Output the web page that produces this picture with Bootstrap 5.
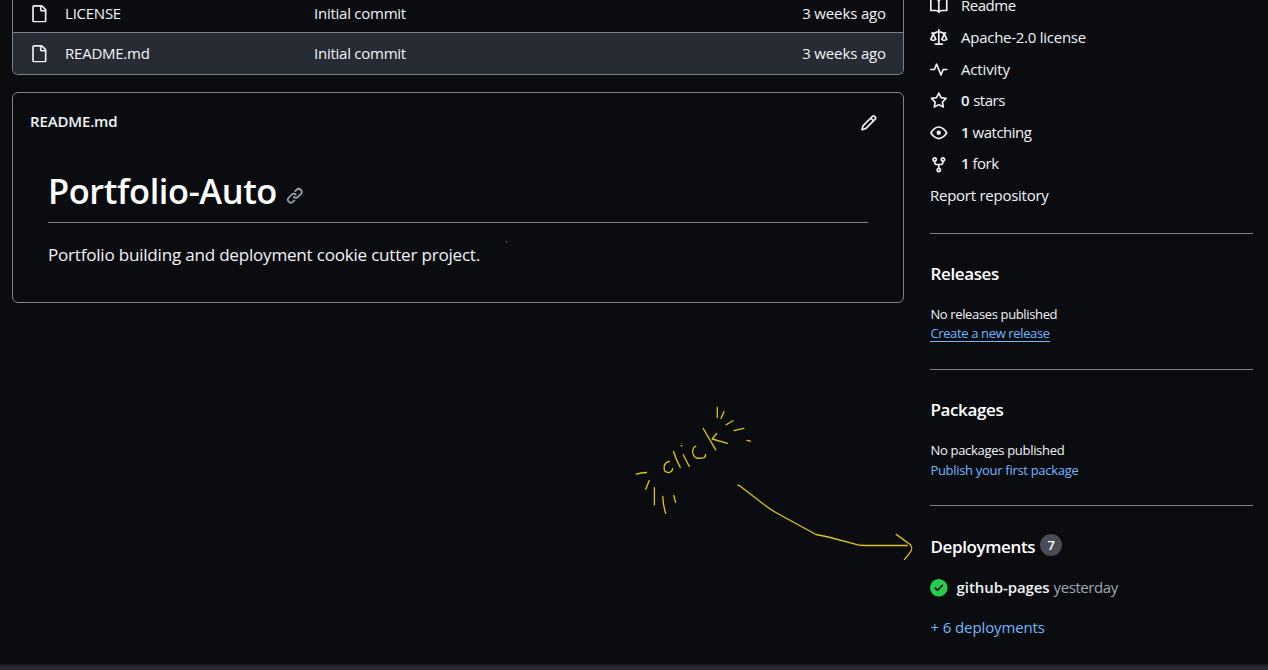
<!DOCTYPE html>
<html lang="en" data-bs-theme="dark">
<head>
<meta charset="utf-8">
<meta name="viewport" content="width=device-width, initial-scale=1">
<title>Portfolio-Auto</title>
<link href="https://cdn.jsdelivr.net/npm/bootstrap@5.3.0/dist/css/bootstrap.min.css" rel="stylesheet">
<style>
:root { --line: #7a828e; --fg: #f0f3f6; --accent: #71b7ff; }
body { background: #0a0c10; color: var(--fg); font: 400 15px/20px "Open Sans", "Noto Sans", sans-serif; letter-spacing: -.26px; height: 670px; overflow: hidden; }
a { color: inherit; text-decoration: none; }
.octo { width: 17.6px; height: 17.6px; fill: currentColor; flex: none; display: block; }
.page { height: 664px; padding: 0 15px 0 12px; gap: 26px; }
.main-col { width: 892px; flex: none; }
.side-col { width: 323px; flex: none; }
.file-box { border: 1px solid var(--line); border-top: 0; border-radius: 0 0 6px 6px; height: 75px; overflow: hidden; margin-bottom: 17px; }
.file-row { padding: 0 17px; white-space: nowrap; }
.file-row .octo { margin: 1px 17.5px 0 0; }
.first-row { height: 32px; padding-bottom: 5px; }
.hover-row { height: 42px; border-top: 1px solid var(--line); background: #272b33; }
.file-row a, .file-row span, .readme-head strong { margin-top: -2px; }
.file-name { width: 249px; }
.ago { letter-spacing: -.14px; }
.readme-box { border: 1px solid var(--line); border-radius: 6px; height: 211px; }
.readme-head { height: 58px; padding: 0 25px 0 17px; }
.readme-head strong { font-weight: 600; letter-spacing: -.15px; }
.readme-head .octo { margin-top: 1px; }
.readme-body { padding: 17px 35px 0; }
.readme-body h1 { font-size: 34.4px; font-weight: 600; line-height: 44px; letter-spacing: -.39px; height: 55px; padding-top: 1px; margin: 0 0 19px; border-bottom: 1px solid var(--line); }
.readme-body h1 .octo { color: #9ea7b3; margin: 18px 0 0 9px; }
.readme-body p { font-size: 17.1px; line-height: 26px; letter-spacing: -.232px; margin: 0; }
.about { margin-top: -10.6px; margin-bottom: 22.05px; }
.about li { height: 31.65px; }
.about .octo { margin: 2px 13.4px 0 0; }
.about strong { font-weight: 600; }
.tight { letter-spacing: -.48px; }
.side-block { border-top: 1px solid var(--line); height: 136px; padding-top: 30px; }
.side-block h2 { font-size: 17px; line-height: 20px; font-weight: 600; letter-spacing: -.38px; margin: 0; padding-left: .5px; }
.side-block p { font-size: 13px; line-height: 20px; letter-spacing: -.3px; margin: 0; padding-left: .4px; }
.side-block .releases { letter-spacing: -.36px; }
.side-block h2 + p { margin-top: 20px; }
.accent { color: var(--accent); }
.lined { display: block; width: max-content; line-height: 16px; padding-top: 1px; border-bottom: 1px solid var(--accent); }
.tally { min-width: 22px; height: 22px; border-radius: 11px; background: #484c54; color: #fff; font-size: 13px; line-height: 22px; font-weight: 600; text-align: center; margin: -3px 0 0 5px; letter-spacing: 0; }
.deploys { padding-top: 31px; }
.deploy { margin: 20px 0; }
.deploy .octo { margin: 2px 9px 0 0; }
.deploy strong { font-weight: 600; letter-spacing: -.08px; margin-right: 4px; }
.deploy span { color: #9ea7b3; letter-spacing: -.43px; }
.more { letter-spacing: -.12px; padding-left: .6px; }
.bottom-bar { height: 6px; background: #272a31; border-top: 2px solid #191b20; }
.sketch { position: absolute; left: 0; top: 0; pointer-events: none; fill: none; stroke: #e0c80a; stroke-width: 1.3; stroke-linecap: round; stroke-linejoin: round; }
</style>
</head>
<body>
<svg width="0" height="0" class="position-absolute">
  <symbol id="file" viewBox="0 0 16 16"><path d="M2 1.75C2 .784 2.784 0 3.75 0h6.586c.464 0 .909.184 1.237.513l2.914 2.914c.329.328.513.773.513 1.237v9.586A1.75 1.75 0 0 1 13.25 16h-9.5A1.75 1.75 0 0 1 2 14.25Zm1.75-.25a.25.25 0 0 0-.25.25v12.5c0 .138.112.25.25.25h9.5a.25.25 0 0 0 .25-.25V6h-2.75A1.75 1.75 0 0 1 9 4.25V1.5Zm6.75.062V4.25c0 .138.112.25.25.25h2.688l-.011-.013-2.914-2.914-.013-.011Z"/></symbol>
</svg>

<div class="page d-flex">
  <main class="main-col">
    <div class="file-box">
      <div class="file-row first-row d-flex align-items-center">
        <svg class="octo"><use href="#file"/></svg>
        <a class="file-name" href="#">LICENSE</a><a href="#">Initial commit</a><span class="ago ms-auto">3 weeks ago</span>
      </div>
      <div class="file-row hover-row d-flex align-items-center">
        <svg class="octo"><use href="#file"/></svg>
        <a class="file-name" href="#">README.md</a><a href="#">Initial commit</a><span class="ago ms-auto">3 weeks ago</span>
      </div>
    </div>
    <section class="readme-box">
      <div class="readme-head d-flex align-items-center justify-content-between">
        <strong>README.md</strong>
        <svg class="octo" viewBox="0 0 16 16"><path d="M11.013 1.427a1.75 1.75 0 0 1 2.474 0l1.086 1.086a1.75 1.75 0 0 1 0 2.474l-8.61 8.61c-.21.21-.47.364-.756.445l-3.251.93a.75.75 0 0 1-.927-.928l.929-3.25c.081-.286.235-.547.445-.758l8.61-8.61Zm.176 4.823L9.75 4.81l-6.286 6.287a.253.253 0 0 0-.064.108l-.558 1.953 1.953-.558a.253.253 0 0 0 .108-.064Zm1.238-3.763a.25.25 0 0 0-.354 0L10.811 3.75l1.439 1.44 1.263-1.263a.25.25 0 0 0 0-.354Z"/></svg>
      </div>
      <div class="readme-body">
        <h1 class="d-flex align-items-start">Portfolio-Auto<svg class="octo" viewBox="0 0 16 16"><path d="m7.775 3.275 1.25-1.25a3.5 3.5 0 1 1 4.95 4.95l-2.5 2.5a3.5 3.5 0 0 1-4.95 0 .751.751 0 0 1 .018-1.042.751.751 0 0 1 1.042-.018 1.998 1.998 0 0 0 2.83 0l2.5-2.5a2.002 2.002 0 0 0-2.83-2.83l-1.25 1.25a.751.751 0 0 1-1.042-.018.751.751 0 0 1-.018-1.042Zm-4.69 9.64a1.998 1.998 0 0 0 2.83 0l1.25-1.25a.751.751 0 0 1 1.042.018.751.751 0 0 1 .018 1.042l-1.25 1.25a3.5 3.5 0 1 1-4.95-4.95l2.5-2.5a3.5 3.5 0 0 1 4.95 0 .751.751 0 0 1-.018 1.042.751.751 0 0 1-1.042.018 1.998 1.998 0 0 0-2.83 0l-2.5 2.5a1.998 1.998 0 0 0 0 2.83Z"/></svg></h1>
        <p>Portfolio building and deployment cookie cutter project.</p>
      </div>
    </section>
  </main>

  <aside class="side-col">
    <ul class="about list-unstyled">
      <li class="d-flex align-items-center"><svg class="octo" viewBox="0 0 16 16"><path d="M0 1.75A.75.75 0 0 1 .75 1h4.253c1.227 0 2.317.59 3 1.501A3.743 3.743 0 0 1 11.006 1h4.245a.75.75 0 0 1 .75.75v10.5a.75.75 0 0 1-.75.75h-4.507a2.25 2.25 0 0 0-1.591.659l-.622.621a.75.75 0 0 1-1.06 0l-.622-.621A2.25 2.25 0 0 0 5.258 13H.75a.75.75 0 0 1-.75-.75Zm7.251 10.324.004-5.073-.002-2.253A2.25 2.25 0 0 0 5.003 2.5H1.5v9h3.757a3.75 3.75 0 0 1 1.994.574ZM8.755 4.75l-.004 7.322a3.752 3.752 0 0 1 1.992-.572H14.5v-9h-3.495a2.25 2.25 0 0 0-2.25 2.25Z"/></svg><a href="#" class="tight">Readme</a></li>
      <li class="d-flex align-items-center"><svg class="octo" viewBox="0 0 16 16"><path d="M8.75.75V2h.985c.304 0 .603.08.867.231l1.29.736c.038.022.08.033.124.033h2.234a.75.75 0 0 1 0 1.5h-.427l2.111 4.692a.75.75 0 0 1-.154.838l-.53-.53.529.531-.001.002-.002.002-.006.006-.006.005-.01.01-.045.04c-.21.176-.441.327-.686.45C14.556 10.78 13.88 11 13 11a4.498 4.498 0 0 1-2.023-.454 3.544 3.544 0 0 1-.686-.45l-.045-.04-.016-.015-.006-.006-.004-.004v-.001a.75.75 0 0 1-.154-.838L12.178 4.5h-.162c-.305 0-.604-.079-.868-.231l-1.29-.736a.245.245 0 0 0-.124-.033H8.75V13h2.5a.75.75 0 0 1 0 1.5h-6.5a.75.75 0 0 1 0-1.5h2.5V3.5h-.984a.245.245 0 0 0-.124.033l-1.289.737c-.265.15-.564.23-.869.23h-.162l2.112 4.692a.75.75 0 0 1-.154.838l-.53-.53.529.531-.001.002-.002.002-.006.006-.016.015-.045.04c-.21.176-.441.327-.686.45C4.556 10.78 3.88 11 3 11a4.498 4.498 0 0 1-2.023-.454 3.544 3.544 0 0 1-.686-.45l-.045-.04-.016-.015-.006-.006-.004-.004v-.001a.75.75 0 0 1-.154-.838L2.178 4.5H1.75a.75.75 0 0 1 0-1.5h2.234a.249.249 0 0 0 .125-.033l1.288-.737c.265-.15.564-.23.869-.23h.984V.75a.75.75 0 0 1 1.5 0Zm2.945 8.477c.285.135.718.273 1.305.273s1.02-.138 1.305-.273L13 6.327Zm-10 0c.285.135.718.273 1.305.273s1.02-.138 1.305-.273L3 6.327Z"/></svg><a href="#">Apache-2.0 license</a></li>
      <li class="d-flex align-items-center"><svg class="octo" viewBox="0 0 16 16"><path d="M6 2c.306 0 .582.187.696.471L10 10.731l1.304-3.26A.751.751 0 0 1 12 7h3.25a.75.75 0 0 1 0 1.5h-2.742l-1.812 4.528a.751.751 0 0 1-1.392 0L6 4.77 4.696 8.03A.75.75 0 0 1 4 8.5H.75a.75.75 0 0 1 0-1.5h2.742l1.812-4.529A.751.751 0 0 1 6 2Z"/></svg><a href="#" class="ago">Activity</a></li>
      <li class="d-flex align-items-center"><svg class="octo" viewBox="0 0 16 16"><path d="M8 .25a.75.75 0 0 1 .673.418l1.882 3.815 4.21.612a.75.75 0 0 1 .416 1.279l-3.046 2.97.719 4.192a.751.751 0 0 1-1.088.791L8 12.347l-3.766 1.98a.75.75 0 0 1-1.088-.79l.72-4.194L.818 6.374a.75.75 0 0 1 .416-1.28l4.21-.611L7.327.668A.75.75 0 0 1 8 .25Zm0 2.445L6.615 5.5a.75.75 0 0 1-.564.41l-3.097.45 2.24 2.184a.75.75 0 0 1 .216.664l-.528 3.084 2.769-1.456a.75.75 0 0 1 .698 0l2.77 1.456-.53-3.084a.75.75 0 0 1 .216-.664l2.24-2.183-3.096-.45a.75.75 0 0 1-.564-.41L8 2.694Z"/></svg><a href="#" class="ago"><strong>0</strong> <span class="tight">stars</span></a></li>
      <li class="d-flex align-items-center"><svg class="octo" viewBox="0 0 16 16"><path d="M8 2c1.981 0 3.671.992 4.933 2.078 1.27 1.091 2.187 2.345 2.637 3.023a1.62 1.62 0 0 1 0 1.798c-.45.678-1.367 1.932-2.637 3.023C11.67 13.008 9.981 14 8 14c-1.981 0-3.671-.992-4.933-2.078C1.797 10.83.88 9.576.43 8.898a1.62 1.62 0 0 1 0-1.798c.45-.677 1.367-1.931 2.637-3.022C4.33 2.992 6.019 2 8 2ZM1.679 7.932a.12.12 0 0 0 0 .136c.411.622 1.241 1.75 2.366 2.717C5.176 11.758 6.527 12.5 8 12.5c1.473 0 2.825-.742 3.955-1.715 1.124-.967 1.954-2.096 2.366-2.717a.12.12 0 0 0 0-.136c-.412-.621-1.242-1.75-2.366-2.717C10.824 4.242 9.473 3.5 8 3.5c-1.473 0-2.825.742-3.955 1.715-1.124.967-1.954 2.096-2.366 2.717ZM8 10a2 2 0 1 1-.001-3.999A2 2 0 0 1 8 10Z"/></svg><a href="#" class="tight"><strong>1</strong> watching</a></li>
      <li class="d-flex align-items-center"><svg class="octo" viewBox="0 0 16 16"><path d="M5 5.372v.878c0 .414.336.75.75.75h4.5a.75.75 0 0 0 .75-.75v-.878a2.25 2.25 0 1 1 1.5 0v.878a2.25 2.25 0 0 1-2.25 2.25h-1.5v2.128a2.251 2.251 0 1 1-1.5 0V8.5h-1.5A2.25 2.25 0 0 1 3.5 6.25v-.878a2.25 2.25 0 1 1 1.5 0ZM5 3.25a.75.75 0 1 0-1.5 0 .75.75 0 0 0 1.5 0Zm6.75.75a.75.75 0 1 0 0-1.5.75.75 0 0 0 0 1.5Zm-3 8.75a.75.75 0 1 0-1.5 0 .75.75 0 0 0 1.5 0Z"/></svg><a href="#" class="tight"><strong>1</strong> fork</a></li>
      <li class="d-flex align-items-center"><a href="#">Report repository</a></li>
    </ul>
    <section class="side-block">
      <h2>Releases</h2>
      <p class="releases">No releases published</p>
      <p class="releases"><a href="#" class="accent lined">Create a new release</a></p>
    </section>
    <section class="side-block">
      <h2>Packages</h2>
      <p>No packages published</p>
      <p><a href="#" class="accent">Publish your first package</a></p>
    </section>
    <section class="side-block deploys">
      <h2 class="d-flex">Deployments<span class="tally">7</span></h2>
      <div class="d-flex align-items-center deploy">
        <svg class="octo" viewBox="0 0 16 16"><path fill="#26cd4d" d="M8 16A8 8 0 1 1 8 0a8 8 0 0 1 0 16Zm3.78-9.72a.751.751 0 0 0-.018-1.042.751.751 0 0 0-1.042-.018L6.75 9.19 5.28 7.72a.751.751 0 0 0-1.042.018.751.751 0 0 0-.018 1.042l2 2a.75.75 0 0 0 1.06 0Z"/></svg>
        <strong>github-pages</strong><span>yesterday</span>
      </div>
      <a href="#" class="accent more">+ 6 deployments</a>
    </section>
  </aside>
</div>
<div class="bottom-bar"></div>

<svg class="sketch" width="1268" height="670" viewBox="0 0 1268 670">
  <!-- rays, upper right -->
  <path d="M717.3 407.5V417.5M724 411.5L721 418.5M726 424.7L733 420.7M734 430.7L743.7 428.3M747 440.4L750.5 441.2"/>
  <!-- "click" pen strokes -->
  <path d="M669.3 461.5Q666 461.8 664.3 465.5Q663.6 469 665 471.3Q668.3 473.8 671.7 471.3L672.6 468.5"/>
  <path d="M673.5 451.3Q676 460 680.3 467.5M683.2 454.8L689.3 466.5M681.4 445.6L681.7 446"/>
  <path d="M695.8 446.4Q693 446.8 692.6 451.5Q693 456.5 696.5 458Q699.5 458.7 704 457.6Q705.8 456.5 705.5 454.5"/>
  <path d="M703.2 428.5L715.6 449.7M716.6 433.5L712.3 439L727.5 443.3"/>
  <!-- rays, lower left -->
  <path d="M636.3 474.2Q641 472.6 646.5 472.5M649.2 480.5L645.8 489.3M654.4 487.7V504.8M662.8 496.5Q663.2 506 665.7 513.3M673.7 495.5L675.6 502.4"/>
  <!-- arrow to the deployments heading -->
  <path d="M737.7 485.2L739 485.3L765 505.3Q770 509.2 776.7 513L816 534.5Q821 535.5 828.3 537L853.3 543.6Q859 545.5 865 545.5H907.3"/>
  <path d="M896.2 534.4L910.5 544.8Q912.6 547.5 911.5 550Q909.5 554 904.4 559.4"/>
  <path stroke="#8a7c0c" stroke-width="1" d="M506.5 241.3V242.2"/>
</svg>
<script src="https://cdn.jsdelivr.net/npm/bootstrap@5.3.0/dist/js/bootstrap.bundle.min.js"></script>
</body>
</html>
